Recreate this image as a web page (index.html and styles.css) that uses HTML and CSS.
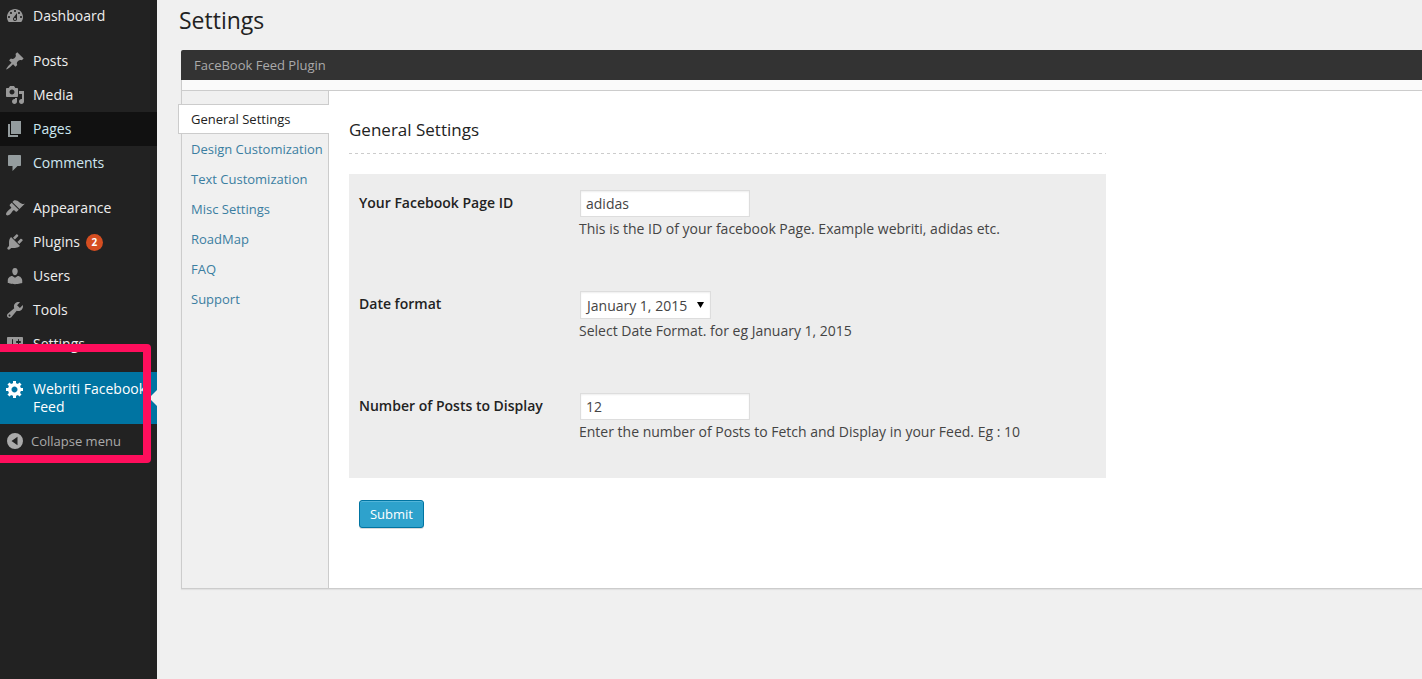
FILE: index.html
```html
<!DOCTYPE html>
<html lang="en">
<head>
<meta charset="utf-8">
<title>Settings</title>
<link rel="stylesheet" href="styles.css">
</head>
<body>
<div class="admin">
  <nav class="sidebar">
    <a class="item"><svg class="icon" viewBox="0 0 20 20"><path d="M3.76 16h12.48c1.1-1.37 1.76-3.11 1.76-5 0-4.42-3.58-8-8-8s-8 3.58-8 8c0 1.89.66 3.63 1.76 5zM10 4c.55 0 1 .45 1 1s-.45 1-1 1-1-.45-1-1 .45-1 1-1zM6 6c.55 0 1 .45 1 1s-.45 1-1 1-1-.45-1-1 .45-1 1-1zm8 0c.55 0 1 .45 1 1s-.45 1-1 1-1-.45-1-1 .45-1 1-1zm-5.37 5.55L12 7v6c0 1.1-.9 2-2 2s-2-.9-2-2c0-.57.24-1.08.63-1.45zM4 10c.55 0 1 .45 1 1s-.45 1-1 1-1-.45-1-1 .45-1 1-1zm12 0c.55 0 1 .45 1 1s-.45 1-1 1-1-.45-1-1 .45-1 1-1zm-5 3c0-.55-.45-1-1-1s-1 .45-1 1 .45 1 1 1 1-.45 1-1z"/></svg><span>Dashboard</span></a>
    <div class="separator"></div>
    <a class="item"><svg class="icon" viewBox="0 0 20 20"><path d="M10.44 3.02l1.82-1.82 6.36 6.35-1.83 1.82c-1.05-.68-2.48-.57-3.41.36l-.75.75c-.92.93-1.04 2.35-.35 3.41l-1.83 1.82-2.41-2.41-2.8 2.79c-.42.42-3.38 2.71-3.8 2.29s1.86-3.39 2.28-3.81l2.79-2.79L4.1 9.36l1.83-1.82c1.05.69 2.48.57 3.4-.36l.75-.75c.93-.92 1.05-2.35.36-3.41z"/></svg><span>Posts</span></a>
    <a class="item"><svg class="icon" viewBox="0 0 20 20"><path d="M13 11V4c0-.55-.45-1-1-1h-1.67L9 1H5L3.67 3H2c-.55 0-1 .45-1 1v7c0 .55.45 1 1 1h10c.55 0 1-.45 1-1zM7 4.5c1.38 0 2.5 1.12 2.5 2.5S8.38 9.5 7 9.5 4.5 8.38 4.5 7 5.62 4.5 7 4.5zM14 6h5v10.5c0 1.38-1.12 2.5-2.5 2.5S14 17.88 14 16.5s1.12-2.5 2.5-2.5c.17 0 .34.02.5.05V9h-3V6zm-4 8.05V13h2v3.5c0 1.38-1.12 2.5-2.5 2.5S7 17.88 7 16.5 8.12 14 9.5 14c.17 0 .34.02.5.05z"/></svg><span>Media</span></a>
    <a class="item hovered"><svg class="icon" viewBox="0 0 20 20"><path d="M6 15V2h10v13H6zm-1 1h8v2H3V5h2v11z"/></svg><span>Pages</span></a>
    <a class="item fading"><svg class="icon" viewBox="0 0 20 20"><path d="M4 2h11c.6 0 1 .4 1 1v9c0 .6-.4 1-1 1h-2.500l-5 5v-5H4c-.6 0-1-.4-1-1V3c0-.6.4-1 1-1z"/></svg><span>Comments</span></a>
    <div class="separator"></div>
    <a class="item"><svg class="icon" viewBox="0 0 20 20"><path d="M14.48 11.06L7.41 3.99l1.5-1.5c.5-.56 2.3-.47 3.51.32 1.21.8 1.43 1.28 2.91 2.1 1.18.64 2.45 1.26 4.45.85zm-.71.71L6.7 4.7 4.93 6.47c-.39.39-.39 1.02 0 1.41l1.06 1.06c.39.39.39 1.03 0 1.42-.6.6-1.43 1.11-2.21 1.69-.35.26-.7.53-1.01.84C1.43 14.23.4 16.08 1.4 17.07c.99 1 2.84-.03 4.18-1.36.31-.31.58-.66.85-1.02.57-.78 1.08-1.61 1.69-2.21.39-.39 1.02-.39 1.41 0l1.06 1.06c.39.39 1.02.39 1.41 0z"/></svg><span>Appearance</span></a>
    <a class="item"><svg class="icon" viewBox="0 0 20 20"><path d="M13.11 4.36L9.87 7.6 8 5.73l3.24-3.24c.35-.34 1.05-.2 1.56.32.52.51.66 1.21.31 1.55zm-8 1.77l.91-1.12 9.01 9.01-1.19.84c-.71.71-2.63 1.16-3.82 1.16H6.14L4.9 17.26c-.59.59-1.54.59-2.12 0-.59-.58-.59-1.53 0-2.12l1.24-1.24v-3.88c0-1.13.4-3.19 1.09-3.89zm7.26 3.97l3.24-3.24c.34-.35 1.04-.21 1.55.31.52.51.66 1.21.31 1.55l-3.24 3.25z"/></svg><span>Plugins</span><span class="count">2</span></a>
    <a class="item"><svg class="icon" viewBox="0 0 20 20"><path d="M10 9.25c-2.27 0-2.73-3.44-2.73-3.44C7 4.02 7.82 2 9.97 2c2.16 0 2.98 2.02 2.71 3.81 0 0-.41 3.44-2.68 3.44zm0 2.57L12.72 10c2.39 0 4.52 2.33 4.52 4.53v2.49s-3.65 1.13-7.24 1.13c-3.65 0-7.24-1.13-7.24-1.13v-2.490c0-2.250 1.940-4.480 4.470-4.480z"/></svg><span>Users</span></a>
    <a class="item"><svg class="icon" viewBox="0 0 20 20"><path d="M16.68 9.77c-1.34 1.34-3.3 1.67-4.95.99l-5.41 6.52c-.99.99-2.59.99-3.58 0s-.99-2.59 0-3.57l6.52-5.42c-.68-1.65-.35-3.61.99-4.95 1.28-1.28 3.12-1.62 4.72-1.06l-2.89 2.89 2.82 2.82 2.86-2.87c.53 1.58.18 3.39-1.08 4.65zM3.81 16.21c.4.39 1.04.39 1.43 0 .4-.4.4-1.04 0-1.43-.39-.4-1.03-.4-1.43 0-.39.39-.39 1.03 0 1.43z"/></svg><span>Tools</span></a>
    <a class="item"><svg class="icon" viewBox="0 0 20 20"><path d="M18 16V4c0-.55-.45-1-1-1H3c-.55 0-1 .45-1 1v12c0 .55.45 1 1 1h14c.55 0 1-.45 1-1zM8 11h1c.55 0 1 .45 1 1s-.45 1-1 1H8v1.500c0 .28-.22.5-.5.5s-.5-.22-.5-.5V13H6c-.55 0-1-.45-1-1s.45-1 1-1h1V5.500c0-.28.22-.5.5-.5s.5.22.5.5V11zm5-2h-1c-.55 0-1-.45-1-1s.45-1 1-1h1V5.500c0-.28.22-.5.5-.5s.5.22.5.5V7h1c.55 0 1 .45 1 1s-.45 1-1 1h-1v5.500c0 .28-.22.5-.5.5s-.5-.22-.5-.5V9z"/></svg><span>Settings</span></a>
    <div class="separator"></div>
    <a class="item current"><svg class="icon" viewBox="0 0 20 20"><path d="M18 12h-2.180c-.17.7-.44 1.350-.81 1.930l1.540 1.540-2.100 2.100-1.540-1.540c-.58.36-1.230.63-1.910.79V19H8v-2.180c-.68-.16-1.330-.43-1.910-.79l-1.540 1.540-2.120-2.120 1.540-1.540c-.36-.58-.63-1.230-.79-1.910H1V9.030h2.170c.16-.7.44-1.350.8-1.940L2.430 5.550l2.100-2.100 1.540 1.540c.58-.37 1.240-.64 1.930-.81V2h3v2.180c.68.16 1.330.43 1.910.79l1.540-1.540 2.120 2.120-1.540 1.540c.36.59.64 1.240.8 1.940H18V12zm-8.500 1.500c1.660 0 3-1.340 3-3s-1.340-3-3-3-3 1.340-3 3 1.340 3 3 3z"/></svg><span>Webriti Facebook Feed</span></a>
    <a class="item collapse"><svg class="icon" viewBox="0 0 20 20"><path fill-rule="evenodd" d="M10 2a8 8 0 1 0 0 16a8 8 0 1 0 0-16zM12.500 5.800v8.400L6.500 10z"/></svg><span>Collapse menu</span></a>
    <div class="highlight"></div>
  </nav>

  <main class="content">
    <h1 class="title">Settings</h1>
    <section class="panel">
      <header class="panel-head">FaceBook Feed Plugin</header>
      <div class="panel-strip"></div>
      <div class="panel-body">
        <div class="tabs">
          <a class="tab active">General Settings</a>
          <a class="tab">Design Customization</a>
          <a class="tab">Text Customization</a>
          <a class="tab">Misc Settings</a>
          <a class="tab">RoadMap</a>
          <a class="tab">FAQ</a>
          <a class="tab">Support</a>
        </div>
        <form class="settings">
          <h2 class="subtitle">General Settings</h2>
          <svg class="rule" width="757" height="1"><line x1="0" y1="0.5" x2="757" y2="0.5"/></svg>
          <div class="fields">
            <div class="row">
              <label class="label">Your Facebook Page ID</label>
              <div class="control"><input class="input" type="text" value="adidas"><p class="hint">This is the ID of your facebook Page. Example webriti, adidas etc.</p></div>
            </div>
            <div class="row">
              <label class="label">Date format</label>
              <div class="control"><div class="select"><span>January 1, 2015</span><svg width="7" height="6" viewBox="0 0 7 6"><path d="M0 0h7L3.500 6z"/></svg></div><p class="hint">Select Date Format. for eg January 1, 2015</p></div>
            </div>
            <div class="row">
              <label class="label">Number of Posts to Display</label>
              <div class="control"><input class="input" type="text" value="12"><p class="hint">Enter the number of Posts to Fetch and Display in your Feed. Eg : 10</p></div>
            </div>
          </div>
          <button class="submit" type="button">Submit</button>
        </form>
      </div>
    </section>
  </main>
</div>
</body>
</html>
```
FILE: styles.css
```css
* { box-sizing: border-box; }

body {
  margin: 0;
  background: #f0f0f0;
  color: #444;
  font: 14px/18px "Open Sans", "Noto Sans", sans-serif;
  overflow: hidden;
}

.admin { display: flex; height: 679px; }

/* Sidebar */
.sidebar {
  position: relative;
  flex: 0 0 157px;
  background: #222;
  margin-top: -1px;
  height: 680px;
}
.item {
  position: relative;
  display: flex;
  align-items: flex-start;
  min-height: 34px;
  padding: 8px 8px 8px 5px;
  color: #eee;
}
.icon {
  flex: none;
  width: 20px;
  height: 20px;
  margin: -1px 8px -1px 0;
  fill: #999;
}
.separator { height: 11px; }
.hovered { background: #111; color: #cbe6f0; }
.fading { color: #cfe7f0; }
.hovered .icon, .fading .icon { fill: #949c9e; }
.count {
  width: 17px;
  height: 17px;
  margin: 1px 0 0 6px;
  border-radius: 50%;
  background: #d54e21;
  color: #fff;
  font-size: 10px;
  font-weight: 700;
  line-height: 17px;
  text-align: center;
}
.current { background: #0074a2; color: #fff; }
.current .icon { fill: #fff; }
.current::after {
  content: "";
  position: absolute;
  right: 0;
  top: 18px;
  border: 8px solid transparent;
  border-left: 0;
  border-right-color: #f0f0f0;
}
.collapse { color: #aaa; font-size: 13px; }
.collapse .icon { margin-right: 6px; fill: #aaa; }
.highlight {
  position: absolute;
  left: -10px;
  top: 345px;
  width: 161px;
  height: 119px;
  border: 8px solid #ff0e5c;
  border-radius: 4px;
}

/* Page */
.content { flex: 1; min-width: 0; padding-left: 22px; overflow: hidden; }
.title {
  margin: 0;
  height: 50px;
  padding-top: 6px;
  color: #222;
  font-size: 23px;
  font-weight: 400;
  line-height: 29px;
}
.panel { margin-left: 2px; box-shadow: 0 1px 1px rgba(0, 0, 0, .06); }
.panel-head {
  height: 30px;
  padding-left: 13px;
  border-radius: 2px 0 0;
  background: #333;
  color: #aaa;
  font-size: 13px;
  line-height: 30px;
}
.panel-strip {
  height: 11px;
  border-left: 1px solid #ccc;
  border-bottom: 1px solid #ccc;
  background: #fafafa;
}
.panel-body {
  display: flex;
  height: 498px;
  border-left: 1px solid #ccc;
  border-bottom: 1px solid #ccc;
  background: #fff;
}
.tabs {
  flex: 0 0 147px;
  padding-top: 13px;
  border-right: 1px solid #ccc;
  background: #f0f0f0;
}
.tab {
  display: block;
  height: 30px;
  padding-left: 9px;
  color: #3b7ea1;
  font-size: 13px;
  line-height: 30px;
  white-space: nowrap;
}
.tab.active {
  position: relative;
  margin: 0 -1px 0 -4px;
  padding-left: 12px;
  border: 1px solid #ccc;
  border-right: 0;
  background: #fff;
  color: #222;
  line-height: 28px;
}
.settings { width: 777px; padding: 28px 0 0 20px; }
.subtitle {
  margin: 0;
  height: 34px;
  color: #222;
  font-size: 17px;
  font-weight: 400;
  line-height: 22px;
}
.rule { display: block; }
.rule line { stroke: #ccc; stroke-dasharray: 3 3; }
.fields {
  height: 304px;
  margin-top: 20px;
  padding: 15px 10px 0;
  background: #ededed;
}
.row { display: flex; height: 101px; }
.row + .row { height: 102px; }
.label { width: 220px; padding-top: 5px; color: #222; font-weight: 600; }
.control { padding-top: 1px; }
.input {
  display: block;
  width: 170px;
  height: 27px;
  margin-left: 1px;
  padding: 0 5px;
  border: 1px solid #ddd;
  background: #fff;
  color: #444;
  font: inherit;
  box-shadow: inset 0 1px 2px rgba(0, 0, 0, .07);
}
.select {
  display: flex;
  align-items: center;
  justify-content: space-between;
  width: 131px;
  height: 28px;
  margin-left: 1px;
  padding: 2px 6px 0;
  border: 1px solid #ddd;
  background: #fff;
  box-shadow: inset 0 1px 2px rgba(0, 0, 0, .07);
}
.select svg { margin-top: -3px; }
.hint { margin: 3px 0 0; white-space: nowrap; }
.submit {
  display: block;
  width: 65px;
  height: 28px;
  margin: 22px 0 0 10px;
  padding: 0;
  border: 1px solid #0074a2;
  border-radius: 3px;
  background: #2ea2cc;
  color: #fff;
  font: 13px/26px "Open Sans", "Noto Sans", sans-serif;
  box-shadow: inset 0 1px 0 rgba(120, 200, 230, .5), 0 1px 0 rgba(0, 0, 0, .15);
}
```
